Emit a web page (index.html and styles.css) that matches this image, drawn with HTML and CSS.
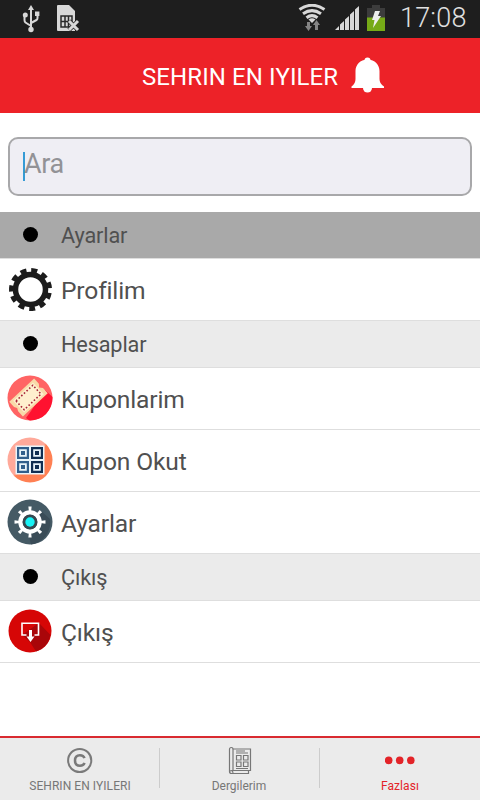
FILE: index.html
```html
<!DOCTYPE html>
<html lang="tr">
<head>
<meta charset="utf-8">
<title>Sehrin En Iyiler</title>
<link rel="stylesheet" href="styles.css">
</head>
<body>
<div class="status">
  <svg class="usb" width="18" height="28" viewBox="0 0 18 28" fill="none" stroke="#d8d8d8" stroke-width="2">
    <path d="M9 4V24M9 21L3.500 17.500Q2.500 17 2.500 15V10M9 18L14.500 15Q15.500 14.500 15.500 13V9"/>
    <g fill="#d8d8d8" stroke="none"><path d="M9 0L12 5H6Z"/><circle cx="9" cy="24.500" r="2.700"/><circle cx="3.300" cy="10" r="2.500"/><path d="M13 6.500h4.400V11H13z"/></g>
  </svg>
  <svg class="sim" width="23" height="28" viewBox="0 0 23 28">
    <path d="M1 0H12L18 6V26H1Q0 26 0 25V1Q0 0 1 0Z" fill="#d8d8d8"/>
    <path d="M4 11H15V22H4ZM8 11V22M11.500 11V22M4 16.500H15" fill="none" stroke="#292929" stroke-width="1.500"/>
    <path d="M12 16L21 25M21 16L12 25" stroke="#222" stroke-width="4.500"/>
    <path d="M12 16L21 25M21 16L12 25" stroke="#d8d8d8" stroke-width="3"/>
  </svg>
  <svg class="wifi" width="28" height="28" viewBox="0 0 28 28" fill="none" stroke="#d8d8d8" stroke-width="3">
    <path d="M1.500 5.500Q14-3 26.500 5.500M5 9.800Q14 3.500 23 9.800M8.500 13.700Q14 9.500 19.500 13.700"/>
    <path d="M10.500 15.500Q14 13 17.500 15.500L14 19Z" fill="#d8d8d8" stroke="none"/>
    <path d="M9 18h3v4h2l-3.500 5L7 22h2zM17 26v-5h-2l3.500-5 3.500 5h-2v5z" fill="#858585" stroke="none"/>
  </svg>
  <svg class="signal" width="25" height="25" viewBox="0 0 25 25" fill="#d8d8d8">
    <path d="M0 24L4 20V24ZM5 24V18.500L9 15V24ZM10 24V13.500L14 10V24ZM15 24V8.500L19 5V24ZM20 24V3.500L24 0V24Z"/>
  </svg>
  <svg class="battery" width="18" height="27" viewBox="0 0 18 27">
    <path d="M0 3H5V0H13V3H18V13H0Z" fill="#3c3c3c"/><path d="M0 12.500H18V26H0Z" fill="#76aa17"/>
    <path d="M8 6H13L11 11H14L6 23L7.500 15H5Z" fill="#eee"/>
  </svg>
  <span class="clock">17:08</span>
</div>
<header class="header">
  <h1 class="title">SEHRIN EN IYILER</h1>
  <svg class="bell" width="34" height="37" viewBox="0 0 34 37" fill="#fff">
    <circle cx="16.500" cy="3.500" r="3"/><circle cx="16.500" cy="31" r="4.500"/>
    <path d="M16.500 2.500C24 2.500 28.500 8 28.500 14V22Q28.500 27 33 29.500V31H.5V29.500Q4.500 27 4.500 22V14C4.500 8 9 2.500 16.500 2.500Z"/>
  </svg>
</header>
<div class="search"><span class="caret"></span><span class="hint">Ara</span></div>
<main class="list">
  <div class="section selected"><i class="dot"></i><span class="label">Ayarlar</span></div>
  <div class="item">
    <svg class="icon" width="46" height="46" viewBox="0 0 46 46" fill="none" stroke="#1c1c1c">
      <circle cx="23.500" cy="23.500" r="15" stroke-width="5.500"/>
      <circle cx="23.500" cy="23.500" r="19" stroke-width="5" pathLength="110" stroke-dasharray="5.500 4.500" stroke-dashoffset="2.750" transform="rotate(85 23.500 23.500)"/>
    </svg>
    <span class="label">Profilim</span>
  </div>
  <div class="section"><i class="dot"></i><span class="label">Hesaplar</span></div>
  <div class="item">
    <svg class="icon" width="46" height="46" viewBox="0 0 46 46">
      <clipPath id="disc"><circle cx="23" cy="23" r="22.500"/></clipPath>
      <g clip-path="url(#disc)">
        <path d="M0 0H46V46H0Z" fill="#ff6464"/>
        <path d="M38 15L60 35L42 60L19 43L24 36Z" fill="#ff1230"/>
        <g transform="rotate(-43 21.500 22.500)">
          <path d="M4.500 12.500H38.500V19.500L36 22.500L38.500 25.500V32.500H4.500V25.500L6 22.500L4.500 19.500Z" fill="#f8d9a8"/>
          <path d="M8 14.500H35V30.500H8Z" fill="#fff0ce"/>
          <path d="M10 16.500H33V28.500H10Z" fill="none" stroke="#a82538" stroke-width="1.600" stroke-dasharray="1.600 2"/>
        </g>
      </g>
    </svg>
    <span class="label">Kuponlarim</span>
  </div>
  <div class="item">
    <svg class="icon" width="46" height="46" viewBox="0 0 46 46">
      <linearGradient id="peach" x1="0" y1="0" x2="1" y2="1"><stop offset=".48" stop-color="#ffa99a"/><stop offset=".52" stop-color="#ff8053"/></linearGradient>
      <circle cx="23" cy="23" r="22.500" fill="url(#peach)"/>
      <path d="M8.500 8.500H37.500V37.500H8.500Z" fill="#e9f4fa"/>
      <g fill="none" stroke-width="2.200">
        <path stroke="#315f8c" d="M11.100 11.100h9.800v9.800h-9.800zM11.100 25.100h9.800v9.800h-9.800z"/>
        <path stroke="#102e52" d="M25.100 11.100h9.800v9.800h-9.800zM25.100 25.100h9.800v9.800h-9.800z"/>
      </g>
      <path d="M14 14h4v4h-4zM14 28h4v4h-4z" fill="#315f8c"/><path d="M28 14h4v4h-4zM28 28h4v4h-4z" fill="#102e52"/>
    </svg>
    <span class="label">Kupon Okut</span>
  </div>
  <div class="item">
    <svg class="icon" width="46" height="46" viewBox="0 0 46 46">
      <circle cx="23" cy="23" r="22.500" fill="#455a65"/>
      <path d="M34 12L43 20A22.500 22.500 0 0 1 24 45.500L22 37Z" fill="#3a4c57"/>
      <g fill="none" stroke="#fff"><circle cx="23" cy="23" r="9.500" stroke-width="4.500"/>
      <circle cx="23" cy="23" r="13" stroke-width="5" pathLength="80" stroke-dasharray="2.800 7.200" stroke-dashoffset="1.400"/></g>
      <circle cx="23" cy="23" r="7.500" fill="#37474f"/><circle cx="23" cy="23" r="4.700" fill="#18f2f5"/>
    </svg>
    <span class="label">Ayarlar</span>
  </div>
  <div class="section"><i class="dot"></i><span class="label">Çıkış</span></div>
  <div class="item">
    <svg class="icon" width="46" height="46" viewBox="0 0 46 46">
      <circle cx="23" cy="23" r="21.500" fill="#d60606"/>
      <path d="M32 15L43.500 27A21.500 21.500 0 0 1 29 43.500L23 34L15 27Z" fill="#a90609"/>
      <path d="M19.500 27H15V15.300H31.500V27H27.500" fill="none" stroke="#fff" stroke-width="1.600"/>
      <path d="M22 22H25V28.500H27.500L23.500 34L19.500 28.500H22Z" fill="#fff"/>
    </svg>
    <span class="label">Çıkış</span>
  </div>
</main>
<nav class="tabs">
  <div class="tab">
    <svg class="tabicon" width="30" height="30" viewBox="0 0 30 30" fill="none" stroke="#7a7a7a">
      <circle cx="14.700" cy="15.500" r="11.600" stroke-width="2"/><path d="M19.500 13.100C18.900 11.100 17.200 10.200 14.900 10.200C11.700 10.200 10 12.300 10 15.500S11.700 20.800 14.900 20.800C17.200 20.800 18.900 19.900 19.500 17.900" stroke-width="2.500"/>
    </svg>
    <span class="wide">SEHRIN EN IYILERI</span>
  </div>
  <div class="tab">
    <svg class="tabicon" width="30" height="30" viewBox="0 0 30 30" fill="none" stroke="#777" stroke-width="1.200">
      <path d="M8 4H25.500V25.500H7M8 25.500V4.500Q8 2.500 6.200 2.500Q4.500 2.500 4.500 4.500V26.500Q4.500 28.500 6.500 28.500H23.500V25.500M5 26Q8 24.500 8 28.500"/>
      <path d="M11 6H20M11 8H23M11.500 10.500h4.500v4.500h-4.500zM18.500 10.500H23v4.500h-4.500zM11.500 17h4.500V21.500h-4.500zM18.500 17H23v4.500h-4.500zM11 23.500H23"/>
    </svg>
    <span class="shift">Dergilerim</span>
  </div>
  <div class="tab active">
    <svg class="tabicon" width="30" height="30" viewBox="0 0 30 30" fill="#e32328"><circle cx="3.700" cy="15.400" r="3.800"/><circle cx="14.700" cy="15.400" r="3.800"/><circle cx="25.800" cy="15.400" r="3.800"/></svg>
    <span class="wide">Fazlası</span>
  </div>
</nav>
</body>
</html>
```
FILE: styles.css
```css
* { box-sizing: border-box; }
body { margin: 0; width: 480px; height: 800px; display: flex; flex-direction: column; background: #fff; font-family: Roboto, "Noto Sans", sans-serif; color: #505050; overflow: hidden; }
svg { display: block; flex: none; }
.status { height: 38px; flex: none; display: flex; align-items: flex-start; background: #1e1e1e; padding-left: 22px; }
.usb { margin-top: 5px; }
.sim { margin: 5px 0 0 17px; }
.wifi { margin: 4px 0 0 218px; }
.signal { margin: 6px 0 0 9px; }
.battery { margin: 5px 0 0 7px; }
.clock { margin-left: 15px; font-size: 27px; line-height: 37px; font-weight: 300; letter-spacing: .2px; color: #e0e0e0; white-space: nowrap; }
.header { height: 75px; flex: none; display: flex; align-items: flex-start; background: #ed2228; padding-left: 142px; }
.title { width: 209px; margin: 24px 0 0; font-size: 24px; line-height: 30px; font-weight: 400; letter-spacing: .1px; color: #fff; white-space: nowrap; }
.bell { margin-top: 19px; }
.search { height: 59px; flex: none; margin: 24px 8px 16px; border: 2px solid #a8a8aa; border-radius: 10px; background: #efeef4; display: flex; align-items: flex-start; padding: 13px 0 0 13px; }
.caret { width: 2px; height: 29px; background: #369bd5; }
.hint { margin-left: -1px; font-size: 27px; line-height: 24px; letter-spacing: -.4px; color: #929296; }
.list { flex: 1; }
.section { height: 47px; display: flex; align-items: center; padding: 1px 0 0 23px; background: #ebebeb; border-bottom: 1px solid #dedede; font-size: 21.7px; letter-spacing: -.15px; }
.selected { background: #a9a9a9; }
.dot { width: 15px; height: 15px; margin: 0 23px 2px 0; border-radius: 50%; background: #000; }
.item { height: 62px; display: flex; align-items: center; padding: 0 0 1px 7px; border-bottom: 1px solid #dedede; font-size: 24.6px; letter-spacing: -.17px; }
.icon { margin-right: 8px; }
.item .label { padding-top: 2px; }
.label { white-space: nowrap; }
.tabs { height: 64px; flex: none; display: flex; border-top: 2px solid #d92a30; background: #ebebeb; }
.tab { width: 160px; height: 62px; display: flex; flex-direction: column; align-items: center; padding-top: 7px; font-size: 12px; line-height: 16px; color: #777; background: linear-gradient(#ccc, #ccc) 159px 10px / 1px 40px no-repeat; }
.tabicon { margin-bottom: 3px; }
.wide { letter-spacing: .06px; }
.shift { padding-right: 2px; }
.active { color: #e32328; background: none; }
```
